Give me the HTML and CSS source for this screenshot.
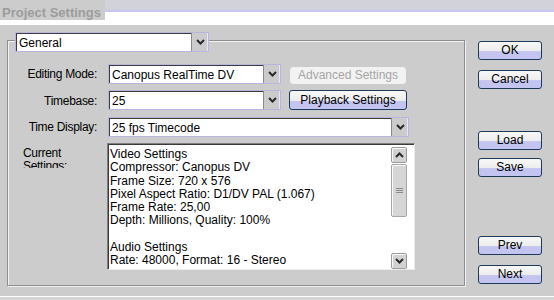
FILE: index.html
```html
<!DOCTYPE html>
<html>
<head><title>Project Settings</title>
<link rel="stylesheet" href="styles.css"></head>
<body>

<div class="titlebar"><span class="title">Project Settings</span></div>

<div class="main">
  <div class="group">
    <div class="select legend">
      <span class="field">General</span>
      <span class="drop"><svg width="9" height="6" viewBox="0 0 9 6"><polyline points="1,1 4.5,4.5 8,1" /></svg></span>
    </div>

    <div class="form">
      <span class="lbl">Editing Mode:</span>
      <div class="select">
        <span class="field">Canopus RealTime DV</span>
        <span class="drop"><svg width="9" height="6" viewBox="0 0 9 6"><polyline points="1,1 4.5,4.5 8,1" /></svg></span>
      </div>
      <span class="btn disabled adv">Advanced Settings</span>

      <span class="lbl">Timebase:</span>
      <div class="select">
        <span class="field">25</span>
        <span class="drop"><svg width="9" height="6" viewBox="0 0 9 6"><polyline points="1,1 4.5,4.5 8,1" /></svg></span>
      </div>
      <span class="btn play">Playback Settings</span>

      <span class="lbl">Time Display:</span>
      <div class="select wide">
        <span class="field">25 fps Timecode</span>
        <span class="drop"><svg width="9" height="6" viewBox="0 0 9 6"><polyline points="1,1 4.5,4.5 8,1" /></svg></span>
      </div>

      <span class="lbl cur">Current Settings:</span>
      <div class="info">
        <div class="info-text">
          <div>Video Settings</div>
          <div>Compressor: Canopus DV</div>
          <div>Frame Size: 720 x 576</div>
          <div>Pixel Aspect Ratio: D1/DV PAL (1.067)</div>
          <div>Frame Rate: 25,00</div>
          <div>Depth: Millions, Quality: 100%</div>
          <div>&nbsp;</div>
          <div>Audio Settings</div>
          <div>Rate: 48000, Format: 16 - Stereo</div>
        </div>
        <div class="sb">
          <span class="sb-btn"><svg width="9" height="6" viewBox="0 0 9 6"><polyline points="1,5 4.5,1.5 8,5" /></svg></span>
          <span class="thumb"><svg width="7" height="7" viewBox="0 0 7 7"><path d="M0 1.5H7M0 3.5H7M0 5.5H7" /></svg></span>
          <span class="track"></span>
          <span class="sb-btn"><svg width="9" height="6" viewBox="0 0 9 6"><polyline points="1,1 4.5,4.5 8,1" /></svg></span>
        </div>
      </div>
    </div>
  </div>

  <div class="side">
    <span class="btn">OK</span>
    <span class="btn next-to">Cancel</span>
    <span class="btn far-a">Load</span>
    <span class="btn near">Save</span>
    <span class="btn far-b">Prev</span>
    <span class="btn next-to">Next</span>
  </div>
</div>

<div class="backwin"></div>

</body>
</html>
```

FILE: styles.css
```css
body { margin: 0; width: 554px; height: 300px; overflow: hidden; background: #cccccc; color: #000; font-family: "Liberation Sans", Arial, sans-serif; font-size: 12px; }

/* title bar */
.titlebar { height: 25px; background: linear-gradient(#d2d2da 0, #d2d2da 10px, #c6c6ee 10px, #c6c6ee 12px, #ffffff 12px); }
.title { display: inline-block; box-sizing: border-box; height: 20px; padding: 3px 4px 0 2px; background: #cccccc; color: #9c9c9c; font-weight: bold; font-size: 13px; line-height: 20px; vertical-align: top; }

.main { display: flex; align-items: flex-start; }

/* etched group box */
.group { box-sizing: border-box; width: 458px; height: 246px; margin: 15px 0 0 7px; border: 1px solid #8e8e8e; box-shadow: inset 1px 1px #f2f2f2, 1px 1px #f2f2f2; }
.legend { width: 194px; margin: -9px 0 0 7px; }

/* drop-down */
.select { display: flex; box-sizing: border-box; height: 20px; border: 1px solid #b6b6de; background: #fff; }
.field { flex: 1; border-left: 1px solid #3c3c3c; border-top: 1px solid #3c3c3c; padding-left: 2px; line-height: 18px; white-space: nowrap; overflow: hidden; }
.drop { display: flex; align-items: center; justify-content: center; width: 16px; background: #cbcbcb; border-left: 1px solid #8a8a8a; box-shadow: inset -1px 0 #e6e6f4; }
.drop svg, .sb-btn svg { fill: none; stroke: #2a2a2a; stroke-width: 2; }

/* form grid */
.form { display: grid; grid-template-columns: 89px 184px 126px; grid-template-rows: 20px 21px 20px auto; row-gap: 6px; margin-top: 12px; }
.form .select { width: 173px; margin-left: 11px; }
.form .select.wide { width: 301px; grid-column: 2 / span 2; }
.lbl { align-self: center; text-align: right; letter-spacing: -0.3px; white-space: nowrap; }
.lbl.cur { align-self: start; text-align: left; white-space: normal; height: 21px; overflow: hidden; margin-top: 4px; padding-left: 15px; line-height: 13px; }

/* buttons */
.btn { display: block; box-sizing: border-box; height: 19px; border: 1px solid #1d3b58; border-radius: 3px; background: linear-gradient(#f8f8f8 0, #ececec 55%, #c4c4f0 56%, #c4c4f0 100%); text-align: center; line-height: 17px; }
.btn.adv { align-self: end; width: 116px; height: 17px; margin-left: 9px; line-height: 15px; }
.btn.play { align-self: start; width: 118px; height: 20px; margin-left: 8px; line-height: 18px; }
.btn.disabled { border-color: #f2f2f2; background: #f2f2f2; color: #a6a6a6; }

/* current settings box */
.info { grid-column: 2 / span 2; display: flex; box-sizing: border-box; width: 308px; height: 127px; margin-left: 10px; padding: 3px 7px 0 2px; border: 1px solid; border-color: #7e7e7e #ececec #ececec #7e7e7e; box-shadow: inset 1px 1px #3a3a3a; background: #fff; }
.info-text { flex: 1; padding-top: 1px; line-height: 13.3px; white-space: nowrap; overflow: hidden; }
.sb { display: flex; flex-direction: column; width: 16px; height: 122px; }
.sb-btn { display: flex; align-items: center; justify-content: center; box-sizing: border-box; height: 16px; border: 1px solid #9c9c9c; border-radius: 2px; background: #d2d2d2; box-shadow: inset 1px 1px #fafafa; }
.thumb { display: flex; align-items: center; justify-content: center; box-sizing: border-box; height: 53px; margin-top: 1px; border: 1px solid #a6a6a6; border-radius: 2px; background: #d6d6d6; box-shadow: inset 1px 1px #fafafa; }
.thumb svg { stroke: #8a8a8a; stroke-width: 1; }
.track { flex: 1; }

/* right-hand buttons */
.side { display: flex; flex-direction: column; width: 64px; margin: 16px 0 0 13px; }
.next-to { margin-top: 10px; }
.far-a { margin-top: 42px; }
.near { margin-top: 8px; }
.far-b { margin-top: 59px; }

.backwin { height: 12px; margin-top: 10px; border-top: 1px solid #fff; background: #d4d4d4; }
```
